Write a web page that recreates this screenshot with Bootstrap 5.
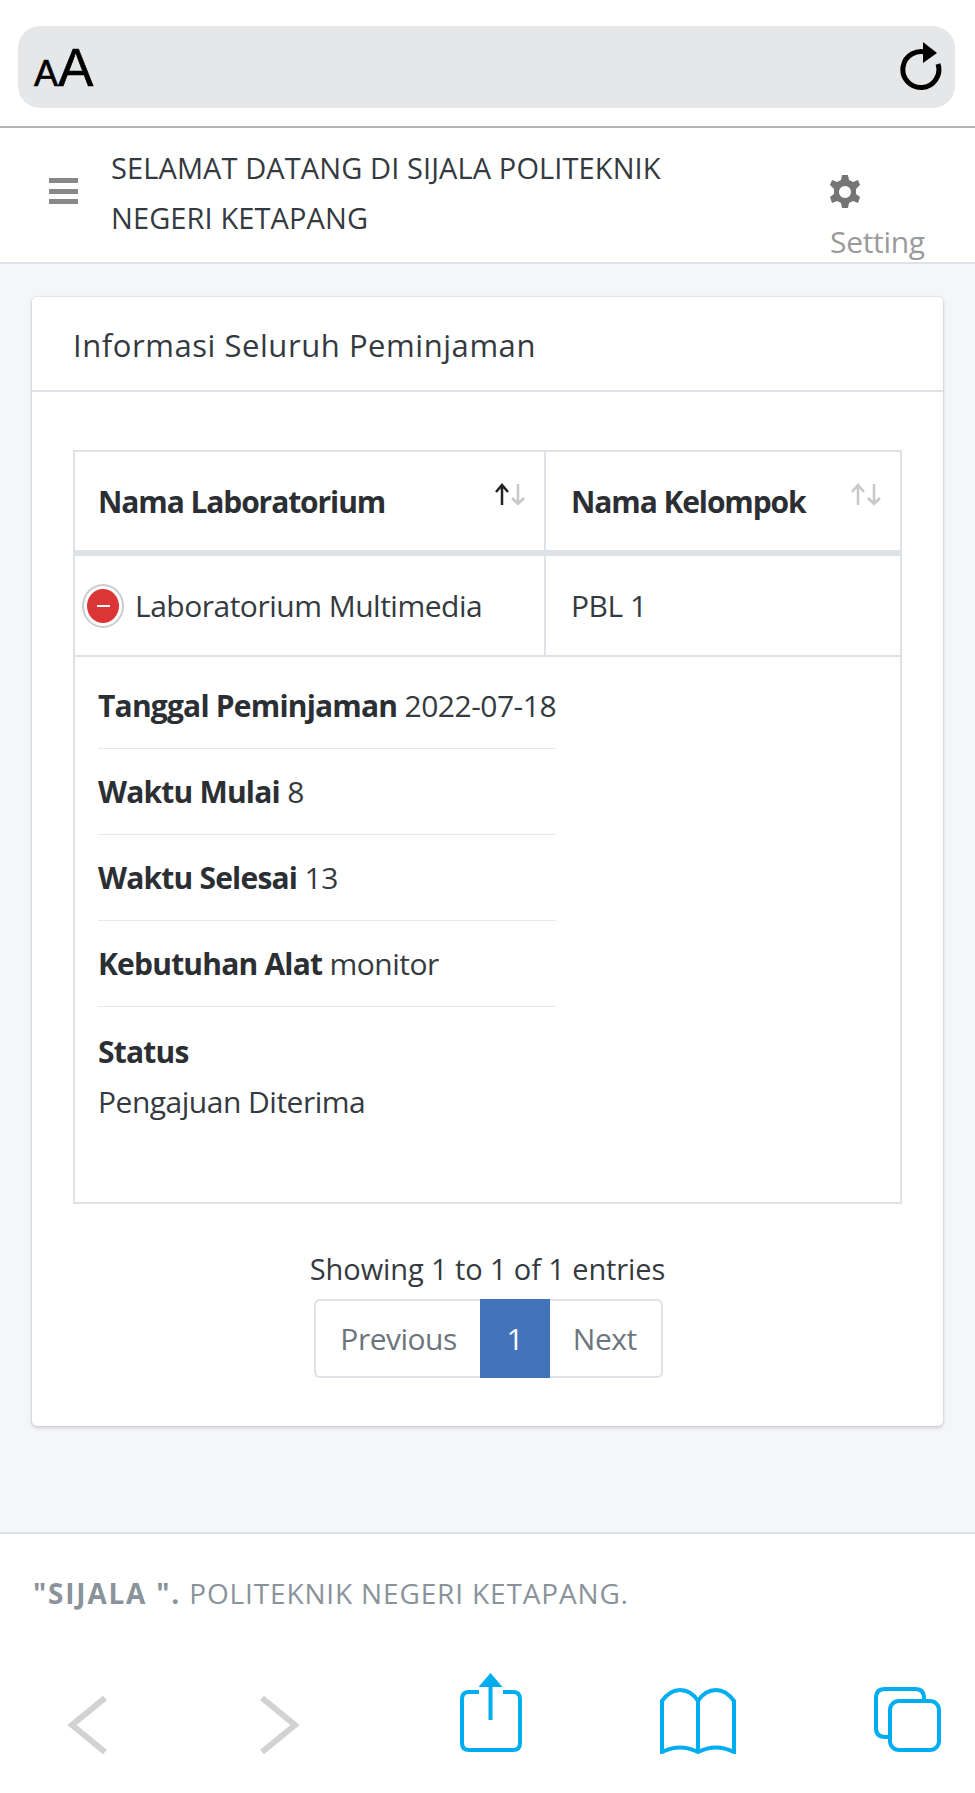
<!DOCTYPE html>
<html lang="id">
<head>
  <meta charset="UTF-8">
  <title>SIJALA</title>
  <link href="https://cdn.jsdelivr.net/npm/bootstrap@5.3.0/dist/css/bootstrap.min.css" rel="stylesheet">
  <style>
    body { width: 975px; height: 1793px; background: #f4f6f9; font-family: "Open Sans", "Liberation Sans", sans-serif; font-size: 30px; color: #343a40; letter-spacing: -0.5px; overflow: hidden; }
    .safari-top { height: 128px; background: #fff; border-bottom: 2px solid #b3b3b3; padding: 26px 20px 0 18px; }
    .url-pill { height: 82px; background: #e6e7e8; border-radius: 22px; padding: 0 12px 0 16px; }
    .aa-small { font-family: "Liberation Sans", sans-serif; font-size: 36px; color: #000; letter-spacing: 0; line-height: 1; -webkit-text-stroke: .6px #000; }
    .aa-big { font-family: "Liberation Sans", sans-serif; font-size: 53px; color: #000; letter-spacing: 0; line-height: 1; -webkit-text-stroke: .6px #000; }
    .top-nav { height: 136px; background: #fff; border-bottom: 2px solid #dee2e6; padding: 0; align-items: flex-start; justify-content: flex-start; flex-wrap: nowrap; }
    .burger { width: 29px; margin: 50px 33px 0 49px; flex: none; }
    .burger i { display: block; height: 5px; background: #888; margin-bottom: 5.5px; }
    .nav-title { width: 590px; line-height: 50px; padding-top: 15px; color: #343a40; font-size: 29px; letter-spacing: 0.1px; flex: none; }
    .nav-setting { margin-left: 129px; padding-top: 47px; color: #9a9a9a; line-height: 1; letter-spacing: -0.3px; }
    .nav-setting svg { display: block; margin-bottom: 18px; }
    .main-wrap { height: 1268px; padding: 33px 32px 0; }
    .info-card { height: 1129px; border: 0; border-radius: 5px; box-shadow: 0 0 2px rgba(0,0,0,.2), 0 2px 4px rgba(0,0,0,.15); }
    .info-card .card-header { height: 95px; background: #fff; border-bottom: 2px solid #dee2e6; padding: 0 41px; line-height: 97px; font-size: 31px; letter-spacing: 0.55px; }
    .info-card .card-body { padding: 58px 41px 0; }
    .pinjam-table { width: 829px; margin: 0; border: 2px solid #dee2e6; table-layout: fixed; color: #343a40; }
    .pinjam-table > :not(caption) > * > * { border: 0; padding: 0 23px; box-shadow: none; }
    .pinjam-table th { height: 102px; border-right: 2px solid #dee2e6 !important; border-bottom: 6px solid #dee2e6 !important; font-weight: 700; position: relative; vertical-align: middle; letter-spacing: -1.1px; color: #2b2f33; }
    .pinjam-table tbody td.cell-main { height: 103px; border-right: 2px solid #dee2e6; border-bottom: 2px solid #dee2e6; vertical-align: middle; }
    .pinjam-table .second-col { padding-left: 25px; }
    .sort-arrows { position: absolute; right: 17px; top: 31px; }
    .first-cell { padding-left: 60px !important; position: relative; }
    .minus-dot { position: absolute; left: 9px; top: 30px; width: 38px; height: 40px; border-radius: 50%; background: #dc3535; border: 3px solid #fff; box-shadow: 0 0 0 2px #ccc; }
    .minus-dot::after { content: ""; position: absolute; left: 10px; top: 16px; width: 13px; height: 2px; background: #fff; }
    .child-cell { height: 547px; vertical-align: top; padding-top: 6px !important; }
    .detail-list { width: 458px; list-style: none; margin: 0; padding: 0; }
    .detail-list li { border-bottom: 1px solid #e6e8ea; height: 86px; line-height: 85px; white-space: nowrap; }
    .detail-list li:last-child { border: 0; height: auto; line-height: 50px; padding-top: 20px; white-space: normal; }
    .detail-list b { font-weight: 700; letter-spacing: -0.8px; color: #2b2f33; }
    .entries-info { text-align: center; line-height: 40px; margin-top: 45px; font-size: 29px; letter-spacing: -0.1px; }
    .pager-row { margin-top: 10px; padding-left: 2px; }
    .pagination { margin: 0; }
    .pagination .page-link { height: 79px; line-height: 75px; padding: 0 24px; font-size: 30px; color: #6c757d; border: 2px solid #dee2e6; background: #fff; }
    .pagination .active .page-link { background: #4273b8; border-color: #4273b8; color: #fff; width: 70px; padding: 0; text-align: center; }
    .pagination .page-item:first-child .page-link { border-radius: 6px 0 0 6px; border-right: 0; }
    .pagination .page-item:last-child .page-link { border-radius: 0 6px 6px 0; border-left: 0; }
    .site-foot { height: 120px; background: #fff; border-top: 2px solid #dee2e6; padding: 39px 33px 0; color: #8a939b; font-size: 28px; line-height: 40px; letter-spacing: .85px; }
    .site-foot b { letter-spacing: 1.8px; }
    .safari-bottom { height: 141px; background: #fff; position: relative; }
    .tool-ico { position: absolute; }
  </style>
</head>
<body>
  <div class="safari-top">
    <div class="url-pill d-flex align-items-center justify-content-between">
      <div class="d-flex align-items-baseline"><span class="aa-small">A</span><span class="aa-big">A</span></div>
      <svg width="44" height="50" viewBox="0 0 44 50"><path d="M29 11 A18 18 0 1 0 39 22" fill="none" stroke="#000" stroke-width="5"/><path d="M24 0 L38 11 L24 21 Z" fill="#000"/></svg>
    </div>
  </div>

  <nav class="navbar top-nav">
    <div class="burger"><i></i><i></i><i></i></div>
    <div class="nav-title">SELAMAT DATANG DI SIJALA POLITEKNIK NEGERI KETAPANG</div>
    <div class="nav-setting">
      <svg width="30" height="34" viewBox="0 0 30 34"><path fill="#757575" fill-rule="evenodd" d="M12 0h6l1 5 4 2 5-2 2 5-4 4v5l4 3-2 6-5-2-4 2-1 5h-6l-1-5-4-2-5 2-2-6 4-3v-5L0 10l2-5 5 2 4-2zM15 11a6 6 0 1 0 .01 0z"/></svg>
      Setting
    </div>
  </nav>

  <div class="main-wrap">
    <div class="card info-card">
      <div class="card-header">Informasi Seluruh Peminjaman</div>
      <div class="card-body">
        <table class="table pinjam-table">
          <colgroup><col style="width:471px"><col></colgroup>
          <thead>
            <tr>
              <th>Nama Laboratorium
                <svg class="sort-arrows" width="34" height="24" viewBox="0 0 34 24"><path d="M9 22V3M3 9l6-7 6 7" fill="none" stroke="#222" stroke-width="2.5"/><path d="M25 1v20M19 15l6 6 6-6" fill="none" stroke="#c8c8c8" stroke-width="2.5"/></svg>
              </th>
              <th class="second-col">Nama Kelompok
                <svg class="sort-arrows" width="34" height="24" viewBox="0 0 34 24"><path d="M9 22V3M3 9l6-7 6 7" fill="none" stroke="#c8c8c8" stroke-width="2.5"/><path d="M25 1v20M19 15l6 6 6-6" fill="none" stroke="#c8c8c8" stroke-width="2.5"/></svg>
              </th>
            </tr>
          </thead>
          <tbody>
            <tr>
              <td class="cell-main first-cell"><span class="minus-dot"></span>Laboratorium Multimedia</td>
              <td class="cell-main second-col">PBL 1</td>
            </tr>
            <tr>
              <td colspan="2" class="child-cell">
                <ul class="detail-list">
                  <li><b>Tanggal Peminjaman</b> 2022-07-18</li>
                  <li><b>Waktu Mulai</b> 8</li>
                  <li><b>Waktu Selesai</b> 13</li>
                  <li><b>Kebutuhan Alat</b> monitor</li>
                  <li><b>Status</b><br>Pengajuan Diterima</li>
                </ul>
              </td>
            </tr>
          </tbody>
        </table>
        <div class="entries-info">Showing 1 to 1 of 1 entries</div>
        <div class="pager-row d-flex justify-content-center">
          <ul class="pagination">
            <li class="page-item"><a class="page-link" href="#">Previous</a></li>
            <li class="page-item active"><a class="page-link" href="#">1</a></li>
            <li class="page-item"><a class="page-link" href="#">Next</a></li>
          </ul>
        </div>
      </div>
    </div>
  </div>

  <footer class="site-foot"><b>"SIJALA ".</b> POLITEKNIK NEGERI KETAPANG.</footer>

  <div class="safari-bottom">
    <svg class="tool-ico" style="left:67px;top:44px" width="42" height="58" viewBox="0 0 42 58"><path d="M38 2 L5 29 L38 56" fill="none" stroke="#d2d2d2" stroke-width="6"/></svg>
    <svg class="tool-ico" style="left:258px;top:44px" width="42" height="58" viewBox="0 0 42 58"><path d="M4 2 L37 29 L4 56" fill="none" stroke="#d2d2d2" stroke-width="6"/></svg>
    <svg class="tool-ico" style="left:459px;top:21px" width="64" height="80" viewBox="0 0 64 80"><path d="M20 19H10Q3 19 3 26V70Q3 77 10 77H54Q61 77 61 70V26Q61 19 54 19H44" fill="none" stroke="#00aeef" stroke-width="4"/><path d="M31.5 10V47" stroke="#00aeef" stroke-width="4"/><path d="M19.5 14 L31.5 0 L43.5 14Z" fill="#00aeef"/></svg>
    <svg class="tool-ico" style="left:660px;top:36px" width="76" height="66" viewBox="0 0 76 66"><path d="M38 62V13Q31 2 20 2Q10 2 2 13V64Q20 55 38 64Q56 55 74 64V13Q66 2 56 2Q45 2 38 13" fill="none" stroke="#00aeef" stroke-width="4"/></svg>
    <svg class="tool-ico" style="left:874px;top:35px" width="67" height="65" viewBox="0 0 67 65"><path d="M15 50H11Q2 50 2 41V11Q2 2 11 2H41Q50 2 50 11V14" fill="none" stroke="#00aeef" stroke-width="4"/><rect x="16" y="14" width="49" height="49" rx="9" fill="#fff" stroke="#00aeef" stroke-width="4"/></svg>
  </div>

  <script src="https://cdn.jsdelivr.net/npm/bootstrap@5.3.0/dist/js/bootstrap.bundle.min.js"></script>
</body>
</html>
